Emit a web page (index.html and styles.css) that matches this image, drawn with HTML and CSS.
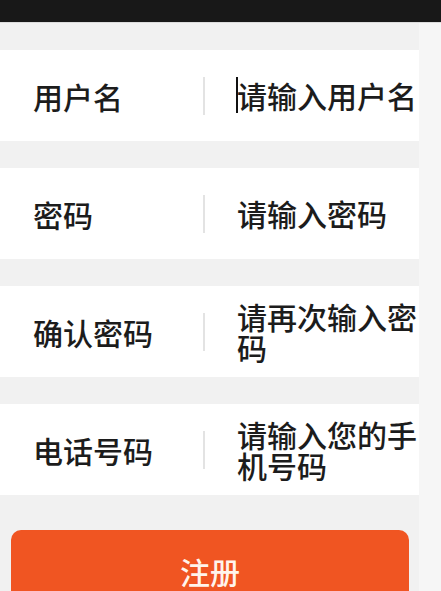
FILE: index.html
```html
<!DOCTYPE html>
<html lang="zh-CN">
<head>
  <meta charset="UTF-8" />
  <meta name="viewport" content="width=device-width, initial-scale=1.0" />
  <title>注册</title>
  <link rel="stylesheet" href="styles.css">
</head>
<body>
  <div class="status-bar"></div>

  <div class="page">
    <form class="register-form">
      <div class="field">
        <label class="field-label">用户名</label>
        <span class="divider"></span>
        <div class="field-input">
          <span class="caret"></span>请输入用户名
        </div>
      </div>
      <div class="field">
        <label class="field-label">密码</label>
        <span class="divider"></span>
        <div class="field-input">请输入密码</div>
      </div>
      <div class="field">
        <label class="field-label">确认密码</label>
        <span class="divider"></span>
        <div class="field-input">请再次输入密码</div>
      </div>
      <div class="field">
        <label class="field-label">电话号码</label>
        <span class="divider"></span>
        <div class="field-input">请输入您的手机号码</div>
      </div>

      <button type="button" class="btn-register">注册</button>
    </form>
  </div>
</body>
</html>
```

FILE: styles.css
```css
html, body {
  margin: 0;
  padding: 0;
  height: 100%;
  overflow: hidden;
}

body {
  font-family: "Noto Sans CJK SC", "Noto Sans", sans-serif;
  background: #f6f6f6;
  color: #1c1c1c;
}

.status-bar {
  height: 22px;
  background: #181818;
  border-bottom: 1px solid #dcdcdc;
}

.page {
  width: 419px;
  min-height: 100%;
  background: #f1f1f1;
  padding-top: 27px;
}

/* 每一行输入项 */
.field {
  display: flex;
  align-items: center;
  height: 91px;
  margin-bottom: 27px;
  background: #fff;
}

.field-label {
  width: 203px;
  padding-left: 33px;
  box-sizing: border-box;
  font-size: 30px;
  line-height: 30px;
  font-weight: 500;
}

.divider {
  width: 2px;
  height: 38px;
  background: #e3e3e3;
  margin-right: 32px;
}

.field-input {
  position: relative;
  flex: 1;
  font-size: 30px;
  line-height: 31px;
  font-weight: 500;
}

/* 输入光标 */
.caret {
  position: absolute;
  left: -1px;
  top: -3px;
  width: 2px;
  height: 36px;
  background: #111;
}

.btn-register {
  display: block;
  width: 398px;
  height: 82px;
  margin: 35px 0 0 11px;
  background: #f05522;
  color: #fff4ec;
  font-family: inherit;
  font-size: 30px;
  font-weight: 500;
  border: none;
  border-radius: 10px;
  cursor: pointer;
}
```
